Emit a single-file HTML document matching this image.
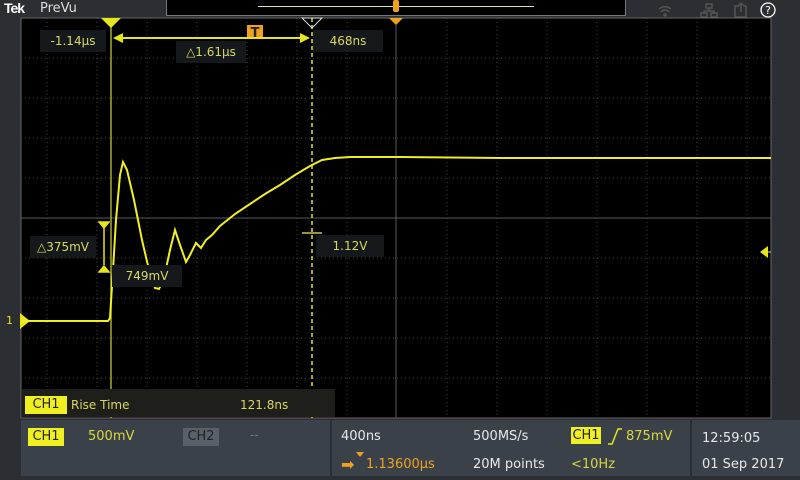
<!DOCTYPE html>
<html><head><meta charset="utf-8"><style>
body{margin:0;width:800px;height:480px;background:#2b2e32;overflow:hidden;font-family:"DejaVu Sans","Liberation Sans",sans-serif;position:relative}
.a{position:absolute;white-space:nowrap}
.lbl{background:#15191c;color:#d8d860;font-size:12px;text-align:center;line-height:22px}
.y{color:#e6e619}
.w{color:#e8e8e8}
.o{color:#f0a020}
.b{font-size:13px;line-height:18px}
</style></head><body>
<div class="a" style="left:4px;top:0;font:bold 14px 'Liberation Sans',sans-serif;color:#fff;letter-spacing:-1px">Tek</div>
<div class="a w" style="left:40px;top:1px;font-size:13px;color:#ddd">PreVu</div>
<div class="a" style="left:166px;top:0;width:458px;height:15px;background:#000;border:1px solid #777;border-top:none"></div>
<div class="a" style="left:258px;top:6px;width:276px;height:1px;background:#e6e680"></div>
<div class="a" style="left:393px;top:0;width:6px;height:12px;background:#f0a020;border-radius:2px"></div>
<svg class="a" style="left:650px;top:1px" width="150" height="18" viewBox="0 0 150 18">
<g fill="none" stroke="#555" stroke-width="1.5"><path d="M9 8a9 9 0 0 1 12 0M11 11a5 5 0 0 1 8 0"/><circle cx="15" cy="14" r="1"/>
<path d="M56 3h6v4h-6zM51 12h6v4h-6zM61 12h6v4h-6zM59 7v3M54 12v-2h10v2"/>
<path d="M89 5h-4v11h11v-11h-2M91 11v-9M88 5l3-3 3 3"/></g>
<circle cx="118" cy="9" r="7" fill="none" stroke="#fff" stroke-width="1.3"/><text x="118" y="13" font-size="11" fill="#fff" text-anchor="middle" font-family="DejaVu Sans">?</text>
</svg>
<svg class="a" style="left:0;top:0" width="800" height="480">
<rect x="21" y="18" width="750" height="400" fill="#000" stroke="#666"/>
<g stroke="#444" stroke-dasharray="1 3">
<path d="M47 18V418M97 18V418M147 18V418M197 18V418M247 18V418M297 18V418M347 18V418M447 18V418M497 18V418M547 18V418M597 18V418M647 18V418M697 18V418M747 18V418"/>
<path d="M21 58H771M21 98H771M21 138H771M21 178H771M21 258H771M21 298H771M21 338H771M21 378H771"/>
</g>
<path d="M21 218H771M396 18V418" stroke="#5a5a5a"/>
<path d="M111 18V418" stroke="#a8a830" stroke-width="1.5"/>
<path d="M312 18V418" stroke="#a8a830" stroke-width="2" stroke-dasharray="4 3"/>
<path d="M101 18h20l-10 10z" fill="#e6e619"/>
<path d="M302 18h20l-10 10z" fill="none" stroke="#ddd"/>
<path d="M389 18h14l-7 7z" fill="#f0a020"/>
<rect x="247" y="25" width="16" height="14" fill="#f0a020"/><text x="255" y="37" font-size="13" font-weight="bold" text-anchor="middle" fill="#222">T</text>
<path d="M116 38H307" stroke="#e6e619" stroke-width="2"/><path d="M113 38l10-5v10z M310 38l-10-5v10z" fill="#e6e619"/>
<path d="M20 313v16l10-8z" fill="#e6e619"/>
<path d="M760 252l8-6v12z" fill="#e6e619"/><path d="M766 252h5" stroke="#e6e619"/>
<path d="M104 225v40M99 222h10l-5 6zM99 272h10l-5-6z" stroke="#e6e619" fill="#e6e619" stroke-width="1.5"/>
<path d="M302 233h20" stroke="#c8c850" stroke-width="1.5"/>
<polyline fill="none" stroke="#f0f020" stroke-width="2" points="21,321 60,321 108,321 110,318 113,270 116,220 120,175 123,162 127,170 134,200 142,240 149,270 155,288 159,289 164,278 170,250 175,230 180,245 186,262 190,255 196,243 201,248 206,240 212,235 220,226 235,214 250,204 265,194 280,185 295,175 310,166 322,160 335,158 350,157 400,157 500,158 600,158 700,158 771,158"/>
</svg>
<div class="a" style="left:6px;top:314px;color:#e6e619;font-size:11px">1</div>
<div class="a lbl" style="left:40px;top:30px;width:66px">-1.14µs</div>
<div class="a lbl" style="left:176px;top:41px;width:70px">△1.61µs</div>
<div class="a lbl" style="left:313px;top:30px;width:70px">468ns</div>
<div class="a lbl" style="left:30px;top:236px;width:66px">△375mV</div>
<div class="a lbl" style="left:112px;top:265px;width:70px">749mV</div>
<div class="a lbl" style="left:316px;top:235px;width:68px">1.12V</div>
<div class="a" style="left:22px;top:389px;width:313px;height:28px;background:#1e1f1a"></div>
<div class="a" style="left:25px;top:396px;width:42px;height:18px;background:#f0f020;color:#222;font-size:13px;text-align:center;line-height:18px">CH1</div>
<div class="a" style="left:71px;top:396px;font-size:12px;line-height:18px;color:#d8d860">Rise Time</div>
<div class="a" style="left:240px;top:396px;font-size:12px;line-height:18px;color:#d8d860">121.8ns</div>
<div class="a" style="left:21px;top:420px;width:309px;height:56px;background:#3a4149"></div>
<div class="a" style="left:332px;top:420px;width:358px;height:56px;background:#3a4149"></div>
<div class="a" style="left:692px;top:420px;width:108px;height:56px;background:#3a4149"></div>
<div class="a b" style="left:28px;top:428px;width:36px;background:#f0f020;color:#222;text-align:center">CH1</div>
<div class="a b" style="left:88px;top:428px;color:#d8d840">500mV</div>
<div class="a b" style="left:183px;top:428px;width:36px;background:#5a6068;color:#222;text-align:center">CH2</div>
<div class="a" style="left:250px;top:428px;font-size:12px;color:#777">--</div>
<div class="a w b" style="left:341px;top:428px">400ns</div>
<div class="a o" style="left:341px;top:455px;font-size:16px">➡</div>
<div class="a" style="left:356px;top:452px;width:0;height:0;border:4px solid transparent;border-top:5px solid #f0a020"></div>
<div class="a o b" style="left:366px;top:456px">1.13600µs</div>
<div class="a w b" style="left:473px;top:428px">500MS/s</div>
<div class="a w b" style="left:473px;top:456px">20M points</div>
<div class="a b" style="left:571px;top:427px;width:30px;height:17px;background:#f0f020;color:#222;text-align:center;line-height:17px">CH1</div>
<svg class="a" style="left:605px;top:427px" width="20" height="20"><path d="M3 17h4l6-15h4" fill="none" stroke="#e6e619" stroke-width="1.5"/></svg>
<div class="a b" style="left:626px;top:428px;color:#d8d840">875mV</div>
<div class="a b" style="left:571px;top:456px;color:#d8d840">&lt;10Hz</div>
<div class="a w b" style="left:702px;top:430px">12:59:05</div>
<div class="a w b" style="left:702px;top:456px">01 Sep 2017</div>
</body></html>
